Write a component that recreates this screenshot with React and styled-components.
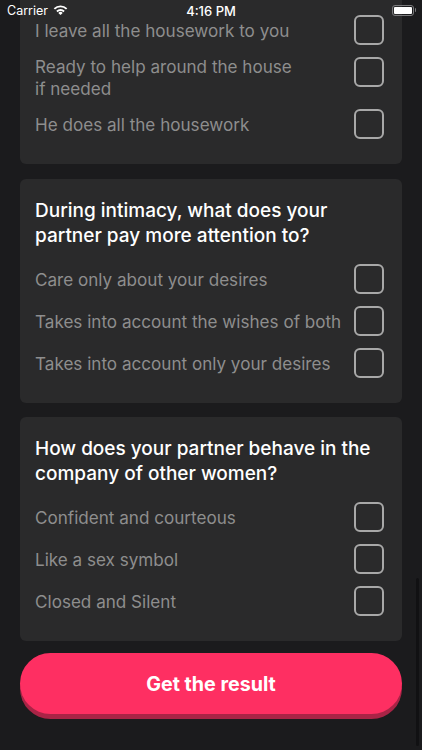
import React from 'react';
import styled, { createGlobalStyle } from 'styled-components';

const questions = [
  {
    id: 'housework',
    options: ['I leave all the housework to you', 'Ready to help around the house\nif needed', 'He does all the housework'],
  },
  {
    id: 'intimacy',
    title: 'During intimacy, what does your partner pay more attention to?',
    options: ['Care only about your desires', 'Takes into account the wishes of both', 'Takes into account only your desires'],
  },
  {
    id: 'company',
    title: 'How does your partner behave in the company of other women?',
    options: ['Confident and courteous', 'Like a sex symbol', 'Closed and Silent'],
  },
];

const App = () => {
  return (
    <Screen>
      <GlobalStyle />
      <StatusBar>
        <StatusLeft>
          <span>Carrier</span>
          <svg width="15" height="11" viewBox="0 0 16 12">
            <path d="M1.3 4.300A9.500 9.500 0 0 1 14.700 4.300" fill="none" stroke="#fff" strokeWidth="2" />
            <path d="M4.100 7.100A5.500 5.500 0 0 1 11.900 7.100" fill="none" stroke="#fff" strokeWidth="2" />
            <path d="M8 11L5.600 8.600A3.400 3.400 0 0 1 10.400 8.600Z" fill="#fff" />
          </svg>
        </StatusLeft>
        <StatusTime>4:16 PM</StatusTime>
        <Battery>
          <BatteryFill />
        </Battery>
      </StatusBar>
      <ScrollBar />
      <Cards>
        {questions.map((q) => (
          <Card key={q.id} $clipped={!q.title}>
            {q.title && <Title>{q.title}</Title>}
            {q.options.map((option) => (
              <Row key={option}>
                <Label>{option}</Label>
                <Check />
              </Row>
            ))}
          </Card>
        ))}
      </Cards>
      <ResultButton>Get the result</ResultButton>
    </Screen>
  );
};

export default App;

const GlobalStyle = createGlobalStyle`
  html, body {
    margin: 0;
    padding: 0;
    background-color: #1b1b1d;
  }
`;

const Screen = styled.div`
  position: relative;
  display: flex;
  flex-direction: column;
  justify-content: flex-end;
  gap: 12px;
  width: 422px;
  height: 750px;
  padding: 0 20px 36px;
  box-sizing: border-box;
  overflow: hidden;
  background-color: #1b1b1d;
  font-family: Inter, "Liberation Sans", sans-serif;
`;

const StatusBar = styled.div`
  position: absolute;
  top: 0;
  left: 0;
  right: 0;
  height: 21px;
  display: flex;
  align-items: center;
  justify-content: space-between;
  padding: 0 8px 0 7px;
  color: #fff;
  font-size: 12.500px;
  z-index: 2;
`;

const StatusLeft = styled.div`
  display: flex;
  align-items: center;
  gap: 5px;
`;

const StatusTime = styled.div`
  position: absolute;
  left: 0;
  right: 0;
  text-align: center;
  font-size: 13px;
  font-weight: 500;
`;

const Battery = styled.div`
  position: relative;
  width: 18px;
  height: 7px;
  padding: 1px;
  border: 1px solid #7a7a7c;
  border-radius: 3px;
  display: flex;
  &::after {
    content: '';
    position: absolute;
    right: -3px;
    top: 1.500px;
    width: 1.500px;
    height: 4px;
    background-color: #7a7a7c;
    border-radius: 0 1px 1px 0;
  }
`;

const BatteryFill = styled.div`
  flex: 1;
  background-color: #fff;
  border-radius: 1px;
`;

const ScrollBar = styled.div`
  position: absolute;
  right: 3px;
  top: 578px;
  width: 3px;
  height: 168px;
  border-radius: 2px;
  background-color: #111113;
`;

const Cards = styled.div`
  display: flex;
  flex-direction: column;
  justify-content: flex-end;
  gap: 14px;
`;

const Card = styled.section`
  display: flex;
  flex-direction: column;
  gap: 12px;
  padding: 20px 18px 25px 15px;
  margin-bottom: ${(p) => (p.$clipped ? '1px' : '0')};
  border-radius: 6px;
  background-color: #2a2a2b;
`;

const Title = styled.h2`
  margin: 0 0 4px;
  color: #fff;
  font-size: 19px;
  font-weight: 500;
  line-height: 24.500px;
`;

const Row = styled.label`
  display: flex;
  align-items: center;
  justify-content: space-between;
`;

const Label = styled.span`
  color: #8e8e8e;
  font-size: 17.100px;
  line-height: 22px;
  margin: -2px 0 -3px;
  padding-top: 1px;
  white-space: pre-line;
`;

const Check = styled.span`
  flex: none;
  align-self: flex-start;
  width: 30px;
  height: 30px;
  box-sizing: border-box;
  border: 2px solid #a8a8a8;
  border-radius: 6px;
`;

const ResultButton = styled.button`
  flex: none;
  height: 61px;
  border: none;
  border-radius: 31px;
  background-color: #fe2f62;
  box-shadow: 0 5px 0 #a92446;
  color: #fff;
  font-family: inherit;
  font-size: 19.700px;
  font-weight: 700;
`;
